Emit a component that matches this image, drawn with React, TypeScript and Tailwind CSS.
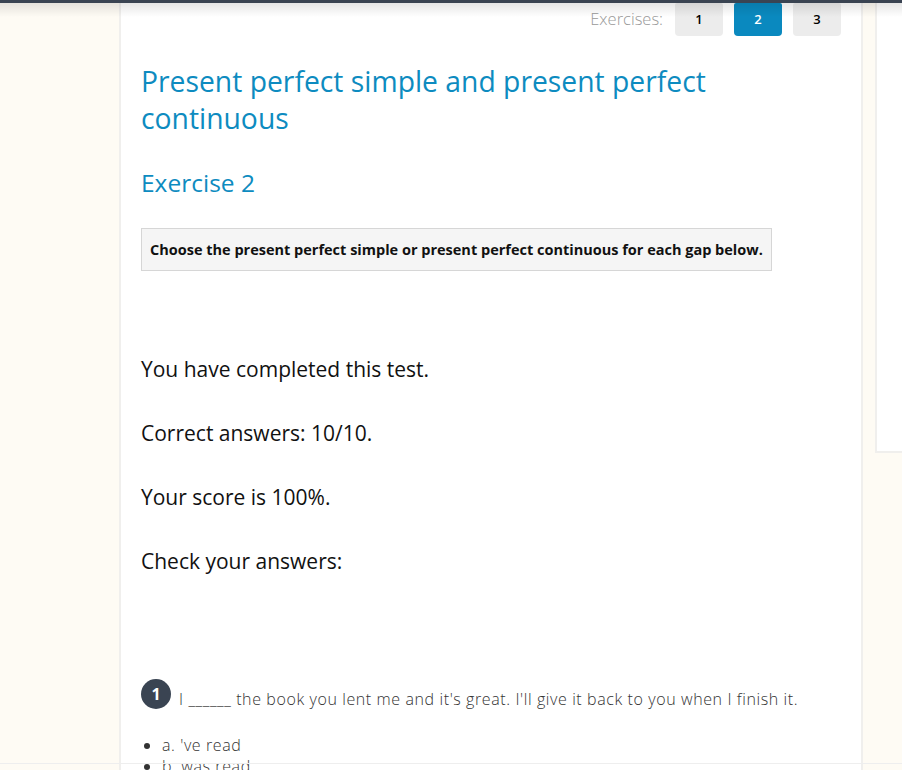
import React from "react";

const font = { fontFamily: "'Open Sans', Lato, sans-serif" };

const results = [
  "You have completed this test.",
  "Correct answers: 10/10.",
  "Your score is 100%.",
  "Check your answers:",
];

const App: React.FC = () => {
  return (
    <div
      className="relative h-[770px] overflow-hidden bg-[#fefbf4]"
      style={font}
    >
      <div className="h-[3px] bg-[#3a4452]" />
      <div className="pointer-events-none absolute left-0 right-0 top-[3px] z-10 h-[14px] bg-gradient-to-b from-black/10 to-transparent" />

      <div className="flex h-full gap-[12px] pl-[119px]">
        {/* main column */}
        <main className="w-[744px] shrink-0 border-x-2 border-[#f0efed] bg-white px-[20px]">
          <div className="flex items-center justify-end gap-[11px]">
            <span className="mr-[1px] text-[16.5px] font-light text-[#999]">
              Exercises:
            </span>
            {["1", "2", "3"].map((n) => (
              <button
                key={n}
                className={`h-[33px] w-[48px] rounded-b-[4px] rounded-t-[2px] text-[13px] font-semibold ${
                  n === "2"
                    ? "bg-[#0a89bf] text-white"
                    : "bg-[#ececec] text-black"
                }`}
              >
                {n}
              </button>
            ))}
          </div>

          <h1 className="mt-[27px] w-[600px] text-[28.3px] leading-[37px] text-[#0d8bc0]">
            Present perfect simple and present perfect continuous
          </h1>

          <h2 className="mt-[30px] text-[24.5px] leading-[32px] text-[#0d8bc0]">
            Exercise 2
          </h2>

          <div className="mt-[29px] inline-block border border-[#d6d6d6] bg-[#f5f5f5] px-[8px] py-[11px] text-[14.5px] font-bold leading-[19px] text-[#111]">
            Choose the present perfect simple or present perfect continuous for
            each gap below.
          </div>

          <div className="mt-[85px] flex flex-col gap-[37px]">
            {results.map((r) => (
              <p key={r} className="text-[21px] leading-[27px] text-[#111]">
                {r}
              </p>
            ))}
          </div>

          <div className="mt-[102px] flex items-center gap-[8px]">
            <span className="flex h-[30px] w-[30px] items-center justify-center rounded-full bg-[#3a4452] text-[16px] font-bold text-white">
              1
            </span>
            <span className="mt-[12px] text-[16px] font-light leading-[21px] tracking-[0.6px] text-[#333]">
              I ______ the book you lent me and it's great. I'll give it back
              to you when I finish it.
            </span>
          </div>

          <ul className="mt-[25px] list-disc pl-[21px] text-[16px] font-light leading-[21px] tracking-[0.6px] text-[#333]">
            <li>a. 've read</li>
            <li>b. was read</li>
          </ul>
        </main>

        {/* right column */}
        <aside className="h-[450px] flex-1 border-b-2 border-l-2 border-[#f0efed] bg-white" />
      </div>

      <div className="pointer-events-none absolute bottom-[6px] left-0 right-0 h-px bg-[#eeeeee]" />
    </div>
  );
};

export default App;
